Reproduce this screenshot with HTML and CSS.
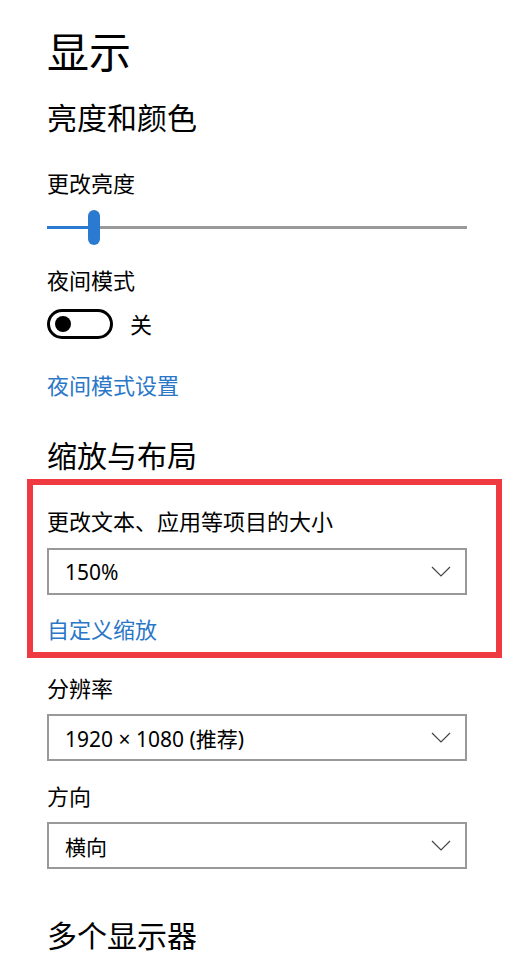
FILE: index.html
```html
<!DOCTYPE html>
<html lang="zh-CN">
<head>
    <meta charset="UTF-8">
    <title>显示</title>
    <link rel="stylesheet" href="styles.css">
</head>
<body>
    <main class="settings">
        <h1 class="page-title">显示</h1>

        <h2 class="group-title">亮度和颜色</h2>
        <div class="label mt-30">更改亮度</div>
        <div class="slider">
            <span class="slider-fill"></span>
            <span class="slider-thumb"></span>
            <span class="slider-rest"></span>
        </div>

        <div class="label mt-20">夜间模式</div>
        <div class="toggle-row">
            <span class="toggle"><span class="toggle-knob"></span></span>
            <span class="toggle-text">关</span>
        </div>
        <a href="#" class="link link-night">夜间模式设置</a>

        <h2 class="group-title mt-36">缩放与布局</h2>
        <section class="highlight">
            <div class="label">更改文本、应用等项目的大小</div>
            <div class="select select-first">
                <span>150%</span>
                <svg class="chevron" width="20" height="11" viewBox="0 0 20 11"><path d="M1 1 L10 10 L19 1" fill="none" stroke="#444" stroke-width="1.2"/></svg>
            </div>
            <a href="#" class="link link-scale">自定义缩放</a>
        </section>

        <div class="label mt-15">分辨率</div>
        <div class="select">
            <span>1920 × 1080 (推荐)</span>
            <svg class="chevron" width="20" height="11" viewBox="0 0 20 11"><path d="M1 1 L10 10 L19 1" fill="none" stroke="#444" stroke-width="1.2"/></svg>
        </div>

        <div class="label mt-20">方向</div>
        <div class="select">
            <span>横向</span>
            <svg class="chevron" width="20" height="11" viewBox="0 0 20 11"><path d="M1 1 L10 10 L19 1" fill="none" stroke="#444" stroke-width="1.2"/></svg>
        </div>

        <h2 class="group-title mt-47">多个显示器</h2>
    </main>
</body>
</html>
```

FILE: styles.css
```css
*{
    padding: 0;
    margin: 0;
    box-sizing: border-box;
}
body{
    background-color: #fff;
    color: #000;
    font-family: "Noto Sans", "Noto Sans CJK SC", sans-serif;
}
.settings{
    width: 467px;
    padding: 28px 0 0 47px;
    display: flex;
    flex-direction: column;
}
.mt-15{
    margin-top: 15px!important;
}
.mt-20{
    margin-top: 20px!important;
}
.mt-30{
    margin-top: 30px!important;
}
.mt-36{
    margin-top: 36px!important;
}
.mt-47{
    margin-top: 47px!important;
}
.page-title{
    font-size: 42px;
    line-height: 48px;
    font-weight: normal;
}
.group-title{
    font-size: 30px;
    line-height: 40px;
    font-weight: normal;
    margin-top: 22px;
}
.label{
    font-size: 22px;
    line-height: 30px;
}
.slider{
    display: flex;
    align-items: center;
    height: 36px;
    margin-top: 11px;
    .slider-fill{
        width: 41px;
        height: 3px;
        background-color: #2a7ad2;
    }
    .slider-thumb{
        width: 12px;
        height: 35px;
        border-radius: 6px;
        background-color: #2a7ad2;
    }
    .slider-rest{
        flex: 1 1 auto;
        height: 3px;
        background-color: #999;
    }
}
.toggle-row{
    display: flex;
    align-items: center;
    gap: 17px;
    margin-top: 14px;
    height: 30px;
    .toggle{
        width: 66px;
        height: 30px;
        border: 3px solid #000;
        border-radius: 15px;
        display: flex;
        align-items: center;
        padding-left: 5px;
    }
    .toggle-knob{
        width: 16px;
        height: 16px;
        border-radius: 50%;
        background-color: #000;
    }
    .toggle-text{
        font-size: 22px;
        line-height: 30px;
    }
}
.link{
    font-size: 22px;
    line-height: 30px;
    color: #2a77c8;
    text-decoration: none;
}
.link-night{
    margin-top: 31px;
}
.link-scale{
    margin-top: 19px;
}
.highlight{
    margin: 3px 0 0 -20px;
    width: 475px;
    border: 6px solid #ef3a42;
    padding: 21px 0 8px 14px;
    display: flex;
    flex-direction: column;
}
.select{
    width: 420px;
    height: 47px;
    border: 2px solid #999;
    margin-top: 11px;
    padding: 0 14px 0 16px;
    display: flex;
    align-items: center;
    justify-content: space-between;
    font-size: 21px;
}
.select-first{
    margin-top: 12px;
}
```
